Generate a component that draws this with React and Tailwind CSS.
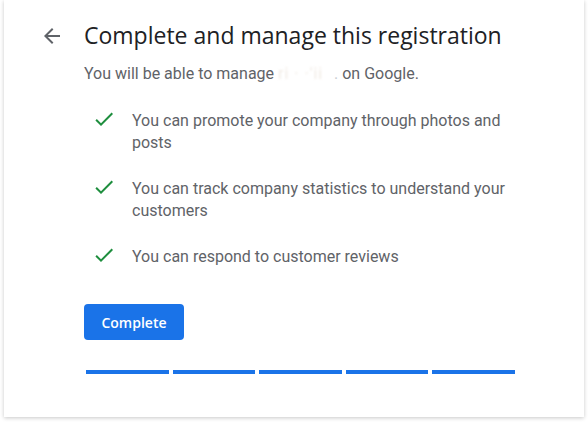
import React from "react";

const ArrowBack = () => (
  <svg width="24" height="24" viewBox="0 0 24 24" fill="#5f6368">
    <path d="M20 11H7.83l5.59-5.59L12 4l-8 8 8 8 1.41-1.41L7.83 13H20v-2z" />
  </svg>
);

const Check = () => (
  <svg width="24" height="24" viewBox="0 0 24 24" fill="#1e8e3e">
    <path d="M9 16.17L4.83 12l-1.42 1.41L9 19 21 7l-1.41-1.41z" />
  </svg>
);

const perks = [
  "You can promote your company through photos and posts",
  "You can track company statistics to understand your customers",
  "You can respond to customer reviews",
];

const App = () => {
  return (
    <div className="h-[425px] w-[588px] bg-white overflow-hidden font-['Roboto',sans-serif]">
      <div className="ml-[4px] w-[580px] h-[417px] bg-white shadow-[0_1px_4px_rgba(0,0,0,0.22)] flex pl-[36px] pt-[19px]">
        <div className="w-[44px] pt-[5px]">
          <ArrowBack />
        </div>
        <div className="flex flex-col">
          <h1 className="text-[23px] leading-[32px] text-[#202124] font-['Open_Sans',sans-serif]">
            Complete and manage this registration
          </h1>
          <p className="mt-[13px] text-[16px] leading-[20px] text-[#5f6368] whitespace-nowrap">
            You will be able to manage{" "}
            <span className="inline-block w-[56px] whitespace-nowrap text-[#f1ebe4] blur-[0.8px] tracking-[1px]">ri · ·'ii</span>
            <span className="text-[#c8ccd0]">.</span> on Google.
          </p>
          <ul className="mt-[26px] flex flex-col gap-[24px] pl-[8px]">
            {perks.map((perk) => (
              <li key={perk} className="flex items-start gap-[16px]">
                <span className="-mt-[3px] shrink-0">
                  <Check />
                </span>
                <span className="w-[380px] text-[16px] leading-[22px] text-[#5f6368]">
                  {perk}
                </span>
              </li>
            ))}
          </ul>
          <button className="mt-[36px] w-[100px] h-[36px] rounded-[4px] bg-[#1a73e8] text-white text-[14px] font-semibold font-['Open_Sans',sans-serif]">
            Complete
          </button>
          <div className="mt-[30px] w-[433px] flex">
            {[0, 1, 2, 3, 4].map((i) => (
              <div key={i} className="flex-1 mx-[2px] h-[4px] bg-[#1a73e8]" />
            ))}
          </div>
        </div>
      </div>
    </div>
  );
};

export default App;
